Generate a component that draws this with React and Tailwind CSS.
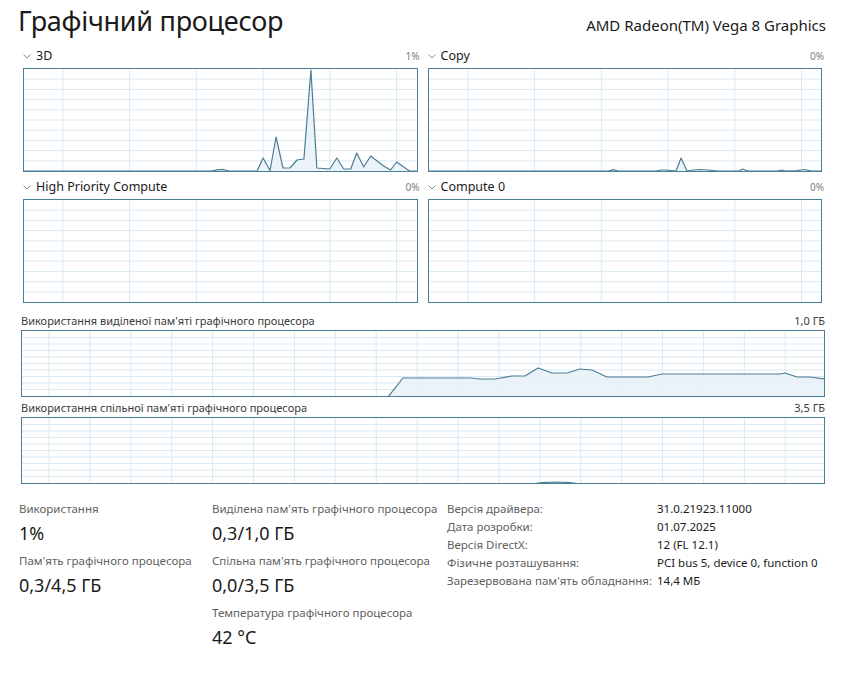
import React from "react";

// --- chart data (coords in the inner drawing area of each chart) ---
const P3D = [
  [0, 102], [188, 102], [194, 100.8], [199, 100.3], [206, 102], [234, 102], [240, 89],
  [247, 101.5], [253, 68], [260, 99], [267, 99], [274, 91], [281, 90], [288, 1],
  [294, 99], [307, 100], [314, 89], [321, 100], [328, 100], [334, 84], [341, 98],
  [348, 87], [361, 97], [368, 101], [374, 93], [387, 102], [394, 102],
];

const PCOPY = [
  [0, 102], [180, 102], [185, 100.6], [190, 102], [228, 102], [233, 101], [238, 101],
  [248, 102], [253, 89], [259, 102], [265, 101], [272, 100.5], [280, 101], [290, 102],
  [311, 102], [315, 100], [320, 102], [350, 102], [354, 101], [358, 102], [369, 101.5],
  [377, 100.5], [384, 102], [394, 102],
];

const PDED = [
  [366, 66], [381, 47], [448, 47], [458, 48], [473, 48], [490, 45], [503, 45], [516, 37],
  [530, 42], [545, 42], [558, 38], [570, 39], [585, 46], [626, 46], [640, 43], [758, 43],
  [763, 42], [775, 46], [788, 46], [803, 48],
];

const PSHR = [
  [0, 66], [510, 66], [520, 64.6], [534, 64], [548, 64.6], [558, 66], [803, 66],
];

function Chevron() {
  return (
    <svg width="8" height="5" viewBox="0 0 8 5" className="shrink-0">
      <path d="M0.5 0.5 L4 4 L7.5 0.5" fill="none" stroke="#8a8a8a" strokeWidth="1" />
    </svg>
  );
}

function Graph({ w, h, vStep, vOff, points, empty }) {
  const vLines = [];
  for (let x = vOff; x < w; x += vStep) vLines.push(x);
  const hLines = [];
  for (let i = 1; i < 10; i++) hLines.push((h * i) / 10);
  const line = points ? points.map((p) => p.join(",")).join(" ") : "";
  const area = points
    ? `${points[0][0]},${h} ${line} ${points[points.length - 1][0]},${h}`
    : "";

  return (
    <svg viewBox={`0 0 ${w} ${h}`} preserveAspectRatio="none" className="block w-full h-full">
      {hLines.map((y) => (
        <line key={"h" + y} x1="0" x2={w} y1={y} y2={y} stroke="#dbe9f2" strokeWidth="1" />
      ))}
      {vLines.map((x) => (
        <line key={"v" + x} x1={x} x2={x} y1="0" y2={h} stroke="#dbe9f2" strokeWidth="1" />
      ))}
      {!empty && (
        <>
          <polygon points={area} fill="#e9f2f8" opacity="0.9" />
          <polyline points={line} fill="none" stroke="#4a7d96" strokeWidth="1.2" strokeLinejoin="round" />
        </>
      )}
    </svg>
  );
}

function EngineChart({ name, pct, points, empty }) {
  return (
    <div className="flex flex-col gap-[3px]">
      <div className="h-[18px] flex items-center justify-between">
        <div className="flex items-center gap-[5px]">
          <Chevron />
          <span className="text-[12.5px] leading-[18px] text-[#1a1a1a]">{name}</span>
        </div>
        <span className="text-[10px] text-[#7d7d7d] -mr-[2px]">{pct}</span>
      </div>
      <div className="h-[104px] border border-[#4a7d96]">
        <Graph w={394} h={102} vStep={67} vOff={39} points={points} empty={empty} />
      </div>
    </div>
  );
}

function MemChart({ label, value, points }) {
  return (
    <div className="flex flex-col gap-[1px]">
      <div className="h-[16px] flex items-center justify-between text-[11px] text-[#3a3a3a]">
        <span>{label}</span>
        <span>{value}</span>
      </div>
      <div className="h-[67px] border border-[#4a7d96]">
        <Graph w={802} h={65} vStep={40.9} vOff={27} points={points} />
      </div>
    </div>
  );
}

function Stat({ label, value }) {
  return (
    <div className="flex flex-col gap-[4px]">
      <div className="text-[11.5px] leading-[16px] text-[#5f5f5f] whitespace-nowrap">{label}</div>
      <div className="text-[18px] leading-[24px] text-[#1a1a1a]">{value}</div>
    </div>
  );
}

const INFO = [
  ["Версія драйвера:", "31.0.21923.11000"],
  ["Дата розробки:", "01.07.2025"],
  ["Версія DirectX:", "12 (FL 12.1)"],
  ["Фізичне розташування:", "PCI bus 5, device 0, function 0"],
  ["Зарезервована пам'ять обладнання:", "14,4 МБ"],
];

export default function App() {
  return (
    <div className="w-[843px] h-[675px] bg-white overflow-hidden font-['Noto_Sans','DejaVu_Sans',sans-serif] text-[#1a1a1a]">
      {/* header */}
      <div className="flex items-baseline justify-between pl-[18px] pr-[17px] pt-[5px]">
        <h1 className="text-[27px] leading-[32px] tracking-[-0.01em] font-normal">Графічний процесор</h1>
        <span className="text-[15px] leading-[20px]">AMD Radeon(TM) Vega 8 Graphics</span>
      </div>

      {/* engines */}
      <div className="grid grid-cols-2 gap-x-[10px] gap-y-[6px] pl-[23px] pr-[21px] mt-[10px]">
        <EngineChart name="3D" pct="1%" points={P3D} />
        <EngineChart name="Copy" pct="0%" points={PCOPY} />
        <EngineChart name="High Priority Compute" pct="0%" empty />
        <EngineChart name="Compute 0" pct="0%" empty />
      </div>

      {/* memory */}
      <div className="flex flex-col gap-[3px] pl-[21px] pr-[18px] mt-[10px]">
        <MemChart label="Використання виділеної пам'яті графічного процесора" value="1,0 ГБ" points={PDED} />
        <MemChart label="Використання спільної пам'яті графічного процесора" value="3,5 ГБ" points={PSHR} />
      </div>

      {/* stats */}
      <div className="flex items-start pl-[19px] mt-[15px]">
        <div className="w-[193px] pt-[2px] flex flex-col gap-[8px]">
          <Stat label="Використання" value="1%" />
          <Stat label="Пам'ять графічного процесора" value="0,3/4,5 ГБ" />
        </div>
        <div className="w-[235px] pt-[2px] flex flex-col gap-[8px]">
          <Stat label="Виділена пам'ять графічного процесора" value="0,3/1,0 ГБ" />
          <Stat label="Спільна пам'ять графічного процесора" value="0,0/3,5 ГБ" />
          <Stat label="Температура графічного процесора" value="42 °C" />
        </div>
        <div className="grid grid-cols-[210px_auto] content-start text-[11.5px] leading-[18px] pt-[1px]">
          {INFO.map(([k, v]) => (
            <React.Fragment key={k}>
              <span className="text-[#5f5f5f] whitespace-nowrap">{k}</span>
              <span className="text-[#1a1a1a] whitespace-nowrap">{v}</span>
            </React.Fragment>
          ))}
        </div>
      </div>
    </div>
  );
}
